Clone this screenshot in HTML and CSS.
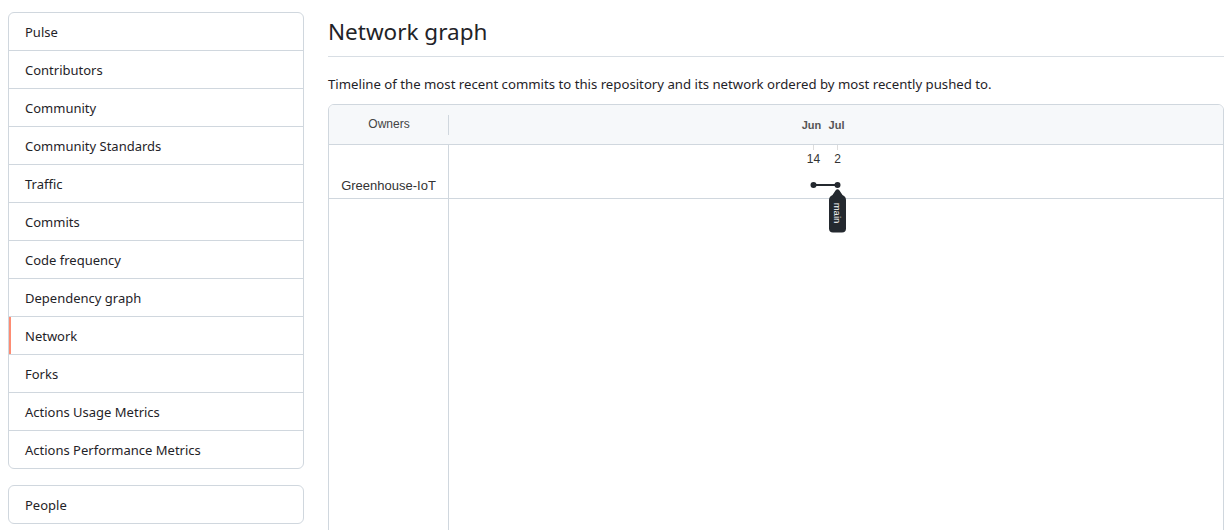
FILE: index.html
```html
<!DOCTYPE html>
<html lang="en">
<head>
<meta charset="utf-8">
<title>Network graph</title>
<link rel="stylesheet" href="styles.css">
</head>
<body>
<div class="layout">
  <aside class="sidebar">
    <nav class="menu">
      <a class="menu-item" href="#">Pulse</a>
      <a class="menu-item" href="#">Contributors</a>
      <a class="menu-item" href="#">Community</a>
      <a class="menu-item" href="#">Community Standards</a>
      <a class="menu-item" href="#">Traffic</a>
      <a class="menu-item" href="#">Commits</a>
      <a class="menu-item" href="#">Code frequency</a>
      <a class="menu-item" href="#">Dependency graph</a>
      <a class="menu-item selected" href="#">Network</a>
      <a class="menu-item" href="#">Forks</a>
      <a class="menu-item" href="#">Actions Usage Metrics</a>
      <a class="menu-item" href="#">Actions Performance Metrics</a>
    </nav>
    <nav class="menu">
      <a class="menu-item" href="#">People</a>
    </nav>
  </aside>
  <main class="main">
    <div class="subhead">
      <h2 class="subhead-title">Network graph</h2>
    </div>
    <p class="lead">Timeline of the most recent commits to this repository and its network ordered by most recently pushed to.</p>
    <div class="graph">
      <div class="graph-head">
        <div class="owners-head"><span class="owners-label">Owners</span></div>
        <div class="months">
          <svg class="months-svg" width="100%" height="39">
            <text x="362.5" y="23.5" text-anchor="middle" class="month">Jun</text>
            <text x="387.5" y="23.5" text-anchor="middle" class="month">Jul</text>
          </svg>
        </div>
      </div>
      <div class="graph-body">
        <div class="owner-cell">Greenhouse-IoT</div>
        <div class="graph-cell">
          <svg class="graph-svg" width="100%" height="53">
            <line x1="364.5" y1="0" x2="364.5" y2="5" class="tick"/>
            <line x1="388.5" y1="0" x2="388.5" y2="5" class="tick"/>
            <text x="364.5" y="18" text-anchor="middle" class="day">14</text>
            <text x="388.5" y="18" text-anchor="middle" class="day">2</text>
            <line x1="364.5" y1="40" x2="388.5" y2="40" class="branch"/>
            <circle cx="364.5" cy="40" r="3" class="commit"/>
            <circle cx="388.5" cy="40" r="3" class="commit"/>
            <path class="tag" d="M380 55 Q380 51.5 383.5 50 L386.5 45.5 Q388.5 43 390.5 45.5 L393.5 50 Q397 51.5 397 55 L397 83.5 Q397 87.5 393 87.5 L384 87.5 Q380 87.5 380 83.5 Z"/>
            <text x="388.5" y="68" text-anchor="middle" dominant-baseline="central" class="tag-text" transform="rotate(90 388.5 68)">main</text>
          </svg>
        </div>
        <div class="owner-cell filler"></div>
        <div class="graph-cell filler"></div>
      </div>
    </div>
  </main>
</div>
</body>
</html>
```

FILE: styles.css
```css
* { box-sizing: border-box; }

html, body {
  margin: 0;
  padding: 0;
  background: #ffffff;
}

body {
  font-family: "Noto Sans", "Liberation Sans", sans-serif;
  font-size: 13px;
  line-height: 21px;
  color: #1f2328;
}

.layout {
  display: grid;
  grid-template-columns: 296px 1fr;
  column-gap: 24px;
  padding: 12px 5px 0 8px;
}

.sidebar {
  display: flex;
  flex-direction: column;
  gap: 16px;
}

.menu {
  display: flex;
  flex-direction: column;
  border: 1px solid #d0d7de;
  border-radius: 6px;
  overflow: hidden;
  background: #fff;
}

.menu-item {
  display: block;
  position: relative;
  padding: 9px 16px 7px;
  line-height: 21px;
  color: #1f2328;
  text-decoration: none;
  border-bottom: 1px solid #d0d7de;
}

.menu-item:last-child {
  border-bottom: 0;
}

.menu-item.selected::before {
  content: "";
  position: absolute;
  left: 0;
  top: 0;
  bottom: 0;
  width: 2px;
  background: #fd8c73;
}

.main {
  min-width: 0;
}

.subhead {
  border-bottom: 1px solid #d8dee4;
  padding-top: 2px;
  padding-bottom: 6px;
  margin-bottom: 16px;
}

.subhead-title {
  margin: 0;
  font-size: 22.5px;
  font-weight: 400;
  line-height: 36px;
}

.lead {
  margin: 0 0 10px;
  padding-top: 1px;
  font-size: 13.2px;
  line-height: 20px;
}

.graph {
  border: 1px solid #d0d7de;
  border-radius: 6px 6px 0 0;
  height: 560px;
  display: flex;
  flex-direction: column;
  overflow: hidden;
  font-family: "Liberation Sans", Arial, sans-serif;
}

.graph-head {
  display: grid;
  grid-template-columns: 120px 1fr;
  height: 40px;
  background: #f6f8fa;
  border-bottom: 1px solid #d0d7de;
}

.owners-head {
  display: flex;
  align-items: center;
  justify-content: center;
  position: relative;
  font-size: 12px;
  line-height: 16px;
  color: #444;
  padding-bottom: 1px;
}

.owners-head::after {
  content: "";
  position: absolute;
  right: 0;
  top: 10px;
  bottom: 9px;
  width: 1px;
  background: #d0d7de;
}

.months {
  min-width: 0;
}

.months-svg,
.graph-svg {
  display: block;
  overflow: visible;
}

.month {
  font-family: "Liberation Sans", Arial, sans-serif;
  font-size: 11px;
  font-weight: 700;
  fill: #555;
}

.graph-body {
  flex: 1;
  display: grid;
  grid-template-columns: 120px 1fr;
  grid-template-rows: 54px 1fr;
}

.owner-cell {
  border-right: 1px solid #d0d7de;
  border-bottom: 1px solid #d0d7de;
  font-size: 13px;
  line-height: 16px;
  color: #333;
  display: flex;
  align-items: flex-end;
  justify-content: center;
  padding-bottom: 4px;
}

.graph-cell {
  border-bottom: 1px solid #d0d7de;
  min-width: 0;
  position: relative;
  z-index: 1;
}

.filler {
  border-bottom: 0;
}

.tick {
  stroke: #dddddd;
  stroke-width: 1;
}

.day {
  font-family: "Liberation Sans", Arial, sans-serif;
  font-size: 12px;
  fill: #333;
}

.branch {
  stroke: #24292f;
  stroke-width: 2;
}

.commit {
  fill: #24292f;
}

.tag {
  fill: #24292f;
}

.tag-text {
  font-family: "Liberation Sans", Arial, sans-serif;
  font-size: 9.5px;
  fill: #ffffff;
}
```
